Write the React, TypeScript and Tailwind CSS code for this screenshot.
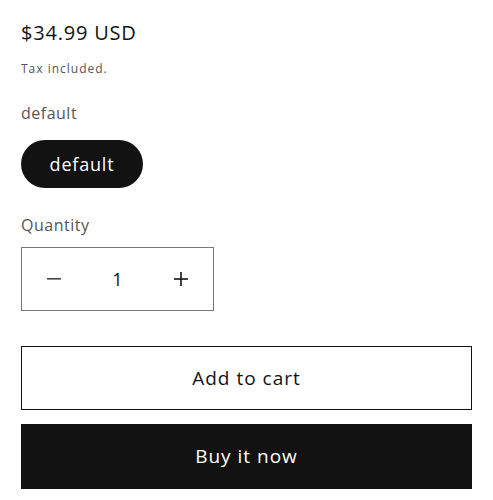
export default function App() {
  const font = { fontFamily: '"Open Sans", "Noto Sans", sans-serif' };
  return (
    <div className="w-[493px] h-[500px] bg-white px-[21px] pt-[19px]" style={font}>
      <div className="text-[20px] leading-[28px] tracking-[0.8px] text-[#121212]">$34.99 USD</div>
      <div className="mt-[14px] text-[12px] leading-[16px] tracking-[1px] text-[#555]">Tax included.</div>
      <div className="mt-[25px] text-[16px] leading-[22px] tracking-[0.5px] text-[#555]">default</div>
      <div className="mt-[16px] flex">
        <div className="w-[122px] h-[48px] rounded-full bg-[#121212] text-white flex items-center justify-center text-[18px] tracking-[0.8px]">
          default
        </div>
      </div>
      <div className="mt-[26px] text-[16px] leading-[22px] tracking-[0.5px] text-[#555]">Quantity</div>
      <div className="mt-[11px] w-[193px] h-[64px] border border-[#777] flex items-center text-[#121212]">
        <div className="w-[64px] flex items-center justify-center">
          <svg width="14" height="2" viewBox="0 0 14 2"><rect width="14" height="1.6" fill="#444" /></svg>
        </div>
        <div className="flex-1 text-center text-[18px]">1</div>
        <div className="w-[64px] flex items-center justify-center">
          <svg width="14" height="14" viewBox="0 0 14 14"><rect y="6.2" width="14" height="1.6" fill="#121212" /><rect x="6.2" width="1.6" height="14" fill="#121212" /></svg>
        </div>
      </div>
      <div className="mt-[35px] h-[64px] border border-[#121212] flex items-center justify-center text-[19px] tracking-[1px] text-[#121212]">
        Add to cart
      </div>
      <div className="mt-[14px] h-[65px] bg-[#121212] flex items-center justify-center text-[19px] tracking-[1px] text-white">
        Buy it now
      </div>
    </div>
  );
}
